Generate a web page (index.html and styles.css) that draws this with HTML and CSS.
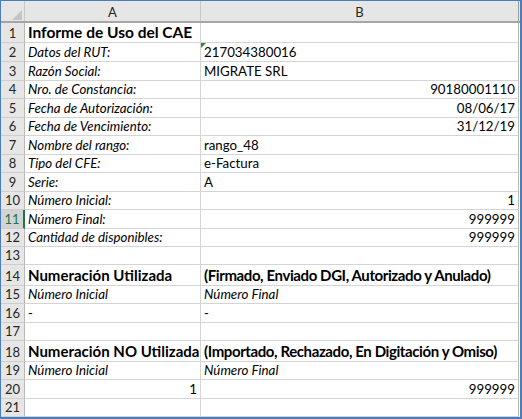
FILE: index.html
```html
<!DOCTYPE html>
<html>
<head>
<meta charset="utf-8">
<link rel="stylesheet" href="styles.css">
</head>
<body>
<div class="sheet">
  <div class="row head">
    <div class="corner"><span class="tri"></span></div>
    <div class="colh">A</div>
    <div class="colh">B</div>
  </div>
  <div class="row h20"><div class="rh">1</div><div class="c title">Informe de Uso del CAE</div><div class="c"></div></div>
  <div class="row h19"><div class="rh">2</div><div class="c it">Datos del RUT:</div><div class="c err">217034380016</div></div>
  <div class="row h19"><div class="rh">3</div><div class="c it">Razón Social:</div><div class="c">MIGRATE SRL</div></div>
  <div class="row h18"><div class="rh">4</div><div class="c it">Nro. de Constancia:</div><div class="c num">90180001110</div></div>
  <div class="row h19"><div class="rh">5</div><div class="c it">Fecha de Autorización:</div><div class="c num">08/06/17</div></div>
  <div class="row h18"><div class="rh">6</div><div class="c it">Fecha de Vencimiento:</div><div class="c num">31/12/19</div></div>
  <div class="row h19"><div class="rh">7</div><div class="c it">Nombre del rango:</div><div class="c">rango_48</div></div>
  <div class="row h18"><div class="rh">8</div><div class="c it">Tipo del CFE:</div><div class="c">e-Factura</div></div>
  <div class="row h19"><div class="rh">9</div><div class="c it">Serie:</div><div class="c">A</div></div>
  <div class="row h18"><div class="rh">10</div><div class="c it">Número Inicial:</div><div class="c num">1</div></div>
  <div class="row h19"><div class="rh sel">11</div><div class="c it">Número Final:</div><div class="c num">999999</div></div>
  <div class="row h18"><div class="rh">12</div><div class="c it">Cantidad de disponibles:</div><div class="c num">999999</div></div>
  <div class="row h18"><div class="rh">13</div><div class="c"></div><div class="c"></div></div>
  <div class="row h21"><div class="rh">14</div><div class="c sec">Numeración Utilizada</div><div class="c sec tight">(Firmado, Enviado DGI, Autorizado y Anulado)</div></div>
  <div class="row h18"><div class="rh">15</div><div class="c it">Número Inicial</div><div class="c it">Número Final</div></div>
  <div class="row h19"><div class="rh">16</div><div class="c">-</div><div class="c">-</div></div>
  <div class="row h18"><div class="rh">17</div><div class="c"></div><div class="c"></div></div>
  <div class="row h21"><div class="rh">18</div><div class="c sec">Numeración NO Utilizada</div><div class="c sec tight">(Importado, Rechazado, En Digitación y Omiso)</div></div>
  <div class="row h18"><div class="rh">19</div><div class="c it">Número Inicial</div><div class="c it">Número Final</div></div>
  <div class="row h19"><div class="rh">20</div><div class="c num">1</div><div class="c num">999999</div></div>
  <div class="row h18"><div class="rh">21</div><div class="c"></div><div class="c"></div></div>
</div>
</body>
</html>
```
FILE: styles.css
```css
html, body {
  margin: 0;
  padding: 0;
  background: #ffffff;
}
.sheet {
  width: 519px;
  height: 416px;
  border-top: 1px solid #4a7ebb;
  border-left: 1px solid #4a7ebb;
  border-right: 2px solid #4a7ebb;
  border-bottom: 2px solid #4a7ebb;
  font-family: Lato, "Liberation Sans", sans-serif;
  font-size: 13.3px;
  color: #000;
  overflow: hidden;
}
.row {
  display: grid;
  grid-template-columns: 24px 176px 318px;
  box-sizing: border-box;
}
.h18 { height: 18px; }
.h19 { height: 19px; }
.h20 { height: 20px; }
.h21 { height: 21px; }
.head {
  height: 22px;
  background: #e6e6e6;
  border-bottom: 2px solid #a5a5a5;
}
.corner {
  position: relative;
  border-right: 1px solid #c9c9c9;
}
.tri {
  position: absolute;
  right: 2px;
  bottom: 1px;
  width: 0;
  height: 0;
  border-left: 10px solid transparent;
  border-bottom: 10px solid #c4c4c4;
}
.colh {
  display: flex;
  align-items: center;
  justify-content: center;
  border-right: 1px solid #c9c9c9;
  color: #262626;
  font-size: 13px;
  padding-top: 1px;
}
.colh:last-child { border-right: 1px solid #9e9e9e; }
.rh {
  background: #e6e6e6;
  border-right: 1px solid #b8b8b8;
  border-bottom: 1px solid #cfcfcf;
  display: flex;
  align-items: flex-end;
  justify-content: center;
  color: #262626;
  box-sizing: border-box;
  padding-bottom: 1px;
  line-height: 16px;
  font-size: 13px;
}
.rh.sel {
  background: #d3d3d3;
  color: #217346;
  border-right: 2px solid #217346;
}
.c {
  border-right: 1px solid #d4d4d4;
  border-bottom: 1px solid #d4d4d4;
  display: flex;
  align-items: flex-end;
  padding: 0 3px 1px 3px;
  box-sizing: border-box;
  white-space: nowrap;
  line-height: 16px;
  position: relative;
}
.row > .c:last-child { border-right: 1px solid #b8b8b8; }
.it { font-style: italic; }
.num { justify-content: flex-end; }
.title, .sec {
  font-weight: bold;
  font-size: 15px;
  line-height: 19px;
  padding-bottom: 0;
}
.title { font-size: 15.5px; }
.tight { letter-spacing: -0.4px; }
.err::before {
  content: "";
  position: absolute;
  left: 0;
  top: 0;
  width: 0;
  height: 0;
  border-top: 5px solid #1e8c3c;
  border-right: 5px solid transparent;
}
```
